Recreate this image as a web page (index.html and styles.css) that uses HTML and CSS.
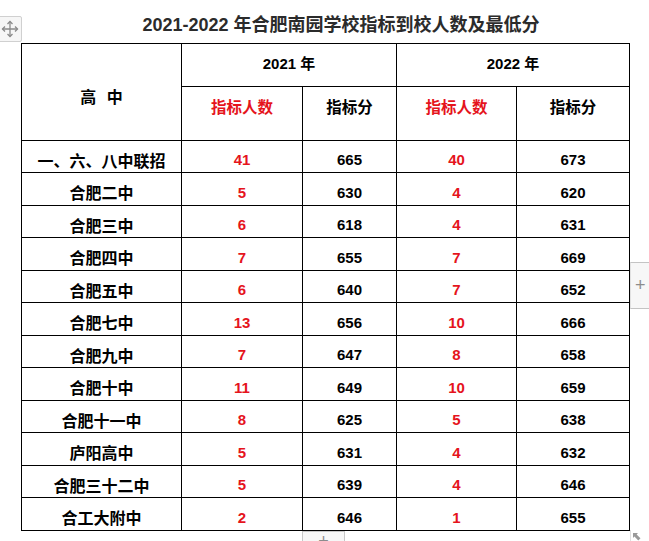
FILE: index.html
```html
<!DOCTYPE html>
<html lang="zh">
<head>
<meta charset="utf-8">
<link rel="stylesheet" href="styles.css">
</head>
<body>
<div class="page">
  <div class="move-handle">
    <svg width="18" height="18" viewBox="0 0 18 18" fill="none" stroke="#8a8a8a" stroke-width="1.3">
      <path d="M9 1.5V16.5M1.5 9H16.5"/>
      <path d="M6.5 4L9 1.5L11.5 4M6.5 14L9 16.5L11.5 14M4 6.5L1.5 9L4 11.5M14 6.5L16.5 9L14 11.5"/>
    </svg>
  </div>
  <h1 class="title">2021-2022 年合肥南园学校指标到校人数及最低分</h1>
  <table class="grid">
    <colgroup>
      <col class="c1"><col class="c2"><col class="c3"><col class="c4"><col class="c5">
    </colgroup>
    <tr class="hrow1">
      <th rowspan="2" class="school-head">高 中</th>
      <th colspan="2" class="year">2021 年</th>
      <th colspan="2" class="year">2022 年</th>
    </tr>
    <tr class="hrow2">
      <th class="sub red">指标人数</th>
      <th class="sub">指标分</th>
      <th class="sub red">指标人数</th>
      <th class="sub">指标分</th>
    </tr>
    <tr><td class="name">一、六、八中联招</td><td class="num red">41</td><td class="num">665</td><td class="num red">40</td><td class="num">673</td></tr>
    <tr class="tall"><td class="name">合肥二中</td><td class="num red">5</td><td class="num">630</td><td class="num red">4</td><td class="num">620</td></tr>
    <tr><td class="name">合肥三中</td><td class="num red">6</td><td class="num">618</td><td class="num red">4</td><td class="num">631</td></tr>
    <tr class="tall"><td class="name">合肥四中</td><td class="num red">7</td><td class="num">655</td><td class="num red">7</td><td class="num">669</td></tr>
    <tr><td class="name">合肥五中</td><td class="num red">6</td><td class="num">640</td><td class="num red">7</td><td class="num">652</td></tr>
    <tr class="tall"><td class="name">合肥七中</td><td class="num red">13</td><td class="num">656</td><td class="num red">10</td><td class="num">666</td></tr>
    <tr><td class="name">合肥九中</td><td class="num red">7</td><td class="num">647</td><td class="num red">8</td><td class="num">658</td></tr>
    <tr class="tall"><td class="name">合肥十中</td><td class="num red">11</td><td class="num">649</td><td class="num red">10</td><td class="num">659</td></tr>
    <tr><td class="name">合肥十一中</td><td class="num red">8</td><td class="num">625</td><td class="num red">5</td><td class="num">638</td></tr>
    <tr class="tall"><td class="name">庐阳高中</td><td class="num red">5</td><td class="num">631</td><td class="num red">4</td><td class="num">632</td></tr>
    <tr><td class="name">合肥三十二中</td><td class="num red">5</td><td class="num">639</td><td class="num red">4</td><td class="num">646</td></tr>
    <tr class="tall"><td class="name">合工大附中</td><td class="num red">2</td><td class="num">646</td><td class="num red">1</td><td class="num">655</td></tr>
  </table>
  <div class="add-col">+</div>
  <div class="add-row">+</div>
  <div class="resize-line"></div>
  <div class="resize">
    <svg width="8" height="8" viewBox="0 0 8 8" fill="#9a9a9a"><path d="M0 0H5L3.6 1.4L7.5 5.3L5.3 7.5L1.4 3.6L0 5Z"/></svg>
  </div>
</div>
</body>
</html>
```

FILE: styles.css
```css
html, body {
  margin: 0;
  padding: 0;
  background: #ffffff;
}

.page {
  position: relative;
  width: 649px;
  height: 541px;
  overflow: hidden;
  font-family: "Liberation Sans", "Noto Sans CJK SC", sans-serif;
  color: #000;
}

.move-handle {
  position: absolute;
  left: -2px;
  top: 16px;
  width: 22px;
  height: 24px;
  border: 1px solid #d0d0d0;
  border-radius: 2px;
  background: #f6f6f6;
  display: flex;
  align-items: center;
  justify-content: center;
}

.title {
  margin: 0;
  height: 43px;
  box-sizing: border-box;
  padding: 13px 0 0 33px;
  font-size: 18px;
  line-height: 24px;
  font-weight: bold;
  color: #2b2b2b;
  text-align: center;
  white-space: nowrap;
}

.grid {
  margin-left: 21px;
  border-collapse: collapse;
  table-layout: fixed;
  width: 609px;
}

.c1 { width: 160px; }
.c2 { width: 121px; }
.c3 { width: 94px; }
.c4 { width: 120px; }
.c5 { width: 113px; }

.grid th,
.grid td {
  border: 1px solid #000;
  padding: 0;
  text-align: center;
  font-weight: bold;
  white-space: nowrap;
  vertical-align: middle;
}

.school-head {
  font-size: 16px;
  word-spacing: 6px;
  padding-top: 7px !important;
}

.year {
  font-size: 15px;
  padding-bottom: 5px !important;
}

.sub {
  font-size: 15.5px;
  padding-bottom: 16px !important;
}

.grid tr { height: 32px; }
.grid tr.tall { height: 33px; }
.grid tr.hrow1 { height: 43px; }
.grid tr.hrow2 { height: 54px; }

.name {
  font-size: 16px;
  padding-top: 6px !important;
}

.num {
  font-size: 15px;
  padding-top: 6px !important;
}

.red { color: #e5141c; }

.add-col {
  position: absolute;
  left: 630px;
  top: 262px;
  width: 24px;
  height: 45px;
  border-top: 1px solid #c4c4c4;
  border-bottom: 1px solid #c4c4c4;
  border-left: 1px solid #e2e2e2;
  background: #f7f7f7;
  color: #8c8c8c;
  font-size: 18px;
  line-height: 45px;
  padding-left: 4px;
  box-sizing: content-box;
}

.add-row {
  position: absolute;
  left: 302px;
  top: 531px;
  width: 43px;
  height: 20px;
  border: 1px solid #c8c8c8;
  background: #f7f7f7;
  color: #8c8c8c;
  font-size: 18px;
  line-height: 18px;
  text-align: center;
  box-sizing: border-box;
}

.resize-line {
  position: absolute;
  left: 630px;
  top: 530px;
  width: 1px;
  height: 11px;
  background: #e0e0e0;
}

.resize {
  position: absolute;
  left: 633px;
  top: 533px;
  width: 8px;
  height: 8px;
  display: flex;
}
```
